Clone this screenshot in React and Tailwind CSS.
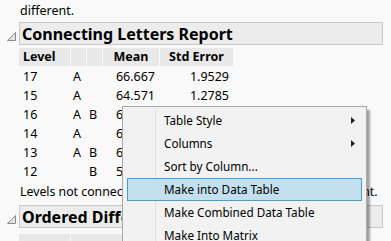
const ROWS = [
  { level: '17', a: 'A', b: '', mean: '66.667', se: '1.9529' },
  { level: '15', a: 'A', b: '', mean: '64.571', se: '1.2785' },
  { level: '16', a: 'A', b: 'B', mean: '64.000', se: '1.4613' },
  { level: '14', a: 'A', b: '', mean: '63.250', se: '1.5496' },
  { level: '13', a: 'A', b: 'B', mean: '60.800', se: '1.8516' },
  { level: '12', a: '', b: 'B', mean: '56.333', se: '2.3904' },
];

const MENU = [
  { label: 'Table Style', sub: true },
  { label: 'Columns', sub: true },
  { label: 'Sort by Column...' },
  { label: 'Make into Data Table', active: true },
  { label: 'Make Combined Data Table' },
  { label: 'Make Into Matrix' },
];

function Disclosure() {
  return (
    <svg width="9" height="9" viewBox="0 0 9 9" className="shrink-0">
      <polygon points="0.5,8.5 8.5,0.5 8.5,8.5" fill="#e4e4e4" stroke="#8a8a8a" strokeWidth="1" />
    </svg>
  );
}

function OutlineHeader({ title }) {
  return (
    <div className="flex items-center h-[23px]">
      <div className="w-[19px] flex justify-center pl-[4px] pt-[6px]">
        <Disclosure />
      </div>
      <div className="flex-1 h-[23px] mr-[8px] bg-[#ececec] border border-[#c8c8c8] flex items-center pl-[2px] text-[16px] font-bold text-black">
        {title}
      </div>
    </div>
  );
}

export default function App() {
  return (
    <div className="relative w-[391px] h-[241px] overflow-hidden bg-[#f9f9f9] text-[12.5px] text-black" style={{ fontFamily: '"Noto Sans", sans-serif' }}>
      <div className="pl-[20px] pt-[2px] h-[20px] leading-[18px]">different.</div>

      <div className="mt-[2px]">
        <OutlineHeader title="Connecting Letters Report" />
      </div>

      {/* table */}
      <div className="pl-[19px] mt-[3px]">
        <div className="flex gap-[1px] h-[18px] font-bold leading-[18px]">
          <div className="w-[51px] bg-[#e8e8e8] pl-[4px]">Level</div>
          <div className="w-[15px] bg-[#e8e8e8]"></div>
          <div className="w-[15px] bg-[#e8e8e8]"></div>
          <div className="w-[56px] bg-[#e8e8e8] text-center">Mean</div>
          <div className="w-[73px] bg-[#e8e8e8] text-center">Std Error</div>
        </div>
        <div className="pt-[1px]">
          {ROWS.map((r) => (
            <div key={r.level} className="flex gap-[1px] h-[19px] leading-[19px]">
              <div className="w-[51px] pl-[4px]">{r.level}</div>
              <div className="w-[15px] pl-[2px]">{r.a}</div>
              <div className="w-[15px] pl-[2px]">{r.b}</div>
              <div className="w-[56px] text-right pr-[4px]">{r.mean}</div>
              <div className="w-[73px] text-right pr-[4px]">{r.se}</div>
            </div>
          ))}
        </div>
      </div>

      <div className="pl-[20px] h-[20px] leading-[20px] mt-[1px] whitespace-nowrap text-[12.3px]">
        Levels not connected by same letter are significantly different.
      </div>

      <div className="mt-[3px]">
        <OutlineHeader title="Ordered Differences Report" />
      </div>

      <div className="pl-[19px] mt-[6px] flex gap-[1px] h-[18px]">
        <div className="w-[51px] bg-[#e8e8e8]"></div>
        <div className="w-[60px] bg-[#e8e8e8]"></div>
        <div className="w-[60px] bg-[#e8e8e8]"></div>
        <div className="w-[60px] bg-[#e8e8e8]"></div>
        <div className="w-[60px] bg-[#e8e8e8]"></div>
      </div>

      {/* context menu */}
      <div className="absolute left-[122px] top-[106px] w-[245px] h-[150px] bg-[#f2f2f2] border border-[#a8a8a8] shadow-[3px_4px_2px_rgba(0,0,0,0.35)] pt-[2px] px-[4px] text-[11.7px]">
        <div className="absolute left-[32px] top-[2px] bottom-0 w-[1px] bg-[#e0e0e0]"></div>
        {MENU.map((m) => (
          <div
            key={m.label}
            className={`relative flex items-center h-[23px] pl-[36px] pr-[6px] border ${m.active ? 'bg-[#c4e0ee] border-[#3ea1d9]' : 'border-transparent'}`}
          >
            <span className="flex-1">{m.label}</span>
            {m.sub && (
              <svg width="4" height="7" viewBox="0 0 4 7">
                <polygon points="0,0 4,3.5 0,7" fill="#222" />
              </svg>
            )}
          </div>
        ))}
      </div>
    </div>
  );
}
